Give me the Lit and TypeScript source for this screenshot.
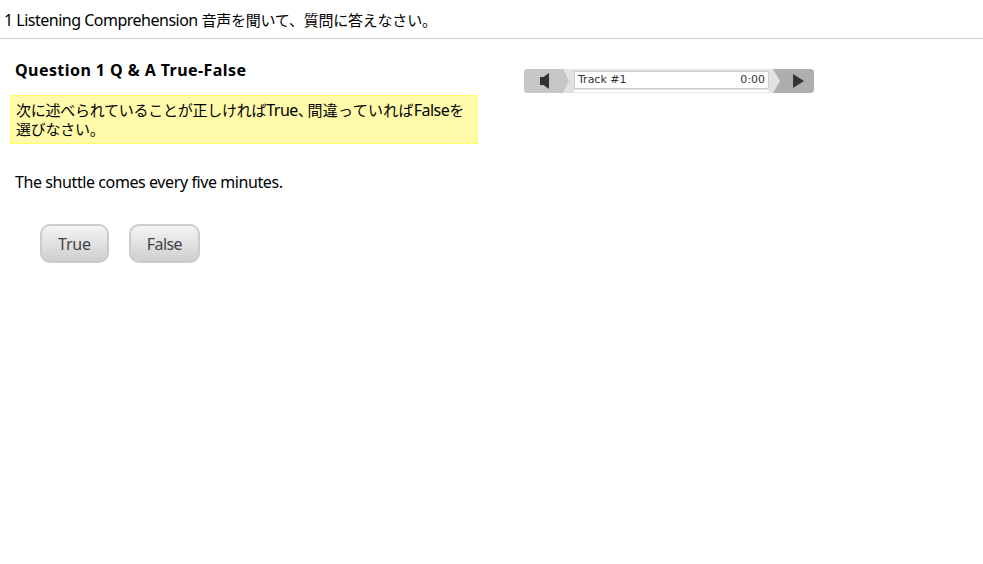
import { LitElement, css, html } from 'lit';
import { customElement } from 'lit/decorators.js';

@customElement('app-root')
export class AppRoot extends LitElement {
  static styles = css`
    :host {
      display: block;
      min-height: 564px;
      background: #fff;
      color: #000;
      font-family: 'Noto Sans', 'Noto Sans CJK JP', sans-serif;
      font-size: 16px;
    }

    .header {
      box-sizing: border-box;
      border-bottom: 1px solid #ccc;
      height: 39px;
      padding: 9px 0 0 4px;
      line-height: 22px;
      letter-spacing: -0.5px;
      white-space: nowrap;
    }

    .header .ja {
      font-size: 15px;
      letter-spacing: -0.22px;
    }

    .main {
      display: flex;
      align-items: flex-start;
    }

    .left {
      width: 468px;
      margin-left: 10px;
    }

    .title {
      margin: 19px 0 0 5px;
      font-size: 16px;
      line-height: 24px;
      font-weight: 700;
      letter-spacing: 0.43px;
    }

    .note {
      box-sizing: border-box;
      margin-top: 13px;
      height: 49px;
      padding: 5px 5px;
      border: 1px solid #ffff66;
      background: #fffbaa;
      line-height: 19px;
      letter-spacing: -0.55px;
    }

    .note .ja {
      font-size: 15px;
      letter-spacing: -0.25px;
    }

    .note .wide {
      letter-spacing: 0.3px;
    }

    .note .comma {
      margin-right: 2.5px;
      font-feature-settings: 'halt';
    }

    .statement {
      margin: 26px 0 0 5px;
      line-height: 24px;
      letter-spacing: -0.41px;
    }

    .buttons {
      display: flex;
      gap: 20px;
      margin: 30px 0 0 30px;
    }

    button {
      box-sizing: border-box;
      height: 39px;
      padding: 0 16px;
      border: 2px solid #ccc;
      border-radius: 10px;
      background: linear-gradient(#f4f4f4, #cfcfcf);
      color: #444;
      font: inherit;
      letter-spacing: -0.2px;
    }

    button.false {
      letter-spacing: -0.6px;
    }

    .player {
      display: flex;
      width: 290px;
      height: 24px;
      margin: 30px 0 0 46px;
      border-radius: 4px;
      overflow: hidden;
      background: #e2e2e2;
    }

    .control {
      display: flex;
      align-items: center;
      flex: none;
      box-sizing: border-box;
    }

    .volume {
      width: 45px;
      padding-left: 16px;
      background: #c6c6c6;
      clip-path: polygon(0 0, 39px 0, 45px 50%, 39px 100%, 0 100%);
    }

    .play {
      width: 41px;
      padding-left: 20px;
      background: #aeaeae;
      clip-path: polygon(0 0, 100% 0, 100% 100%, 0 100%, 7px 50%);
    }

    .track {
      flex: 1;
      align-self: flex-start;
      box-sizing: border-box;
      display: flex;
      justify-content: space-between;
      height: 18px;
      margin: 2px 4px 0 5px;
      padding: 0 3px;
      border: 1px solid #ccc;
      background: #fff;
      box-shadow: 0 1px 0 #e2e2e2, 0 3px 0 #fff;
      color: #333;
      font-family: 'DejaVu Sans', sans-serif;
      font-size: 11px;
      line-height: 15px;
    }
  `;

  render() {
    return html`
      <div class="header">1 Listening Comprehension <span class="ja">音声を聞いて、質問に答えなさい。</span></div>
      <div class="main">
        <div class="left">
          <div class="title">Question 1 Q &amp; A True-False</div>
          <div class="note"><span class="ja">次に述べられていることが正しければ</span>True<span class="ja comma">、</span><span class="ja wide">間違っていれば</span>False<span class="ja">を</span><span class="ja">選びなさい。</span></div>
          <div class="statement">The shuttle comes every five minutes.</div>
          <div class="buttons">
            <button>True</button>
            <button class="false">False</button>
          </div>
        </div>
        <div class="player">
          <div class="control volume">
            <svg width="9" height="16" viewBox="0 0 9 16"><path d="M0 4h3.500L9 0v16l-5.500-4H0z" fill="#333" /></svg>
          </div>
          <div class="track"><span>Track #1</span><span>0:00</span></div>
          <div class="control play">
            <svg width="11" height="14" viewBox="0 0 11 14"><path d="M0 0l11 7-11 7z" fill="#333" /></svg>
          </div>
        </div>
      </div>
    `;
  }
}
